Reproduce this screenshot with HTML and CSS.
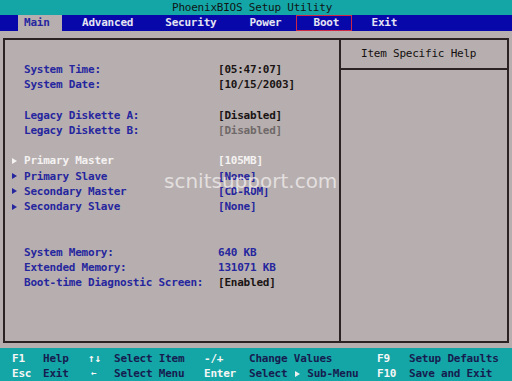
FILE: index.html
```html
<!DOCTYPE html>
<html>
<head>
<meta charset="utf-8">
<title>PhoenixBIOS Setup Utility</title>
<link rel="stylesheet" href="styles.css">
</head>
<body>
<div class="screen">
  <header class="title">PhoenixBIOS Setup Utility</header>
  <nav class="menubar">
    <span class="tab tab-main">Main</span>
    <span class="tab tab-adv">Advanced</span>
    <span class="tab tab-sec">Security</span>
    <span class="tab tab-pow">Power</span>
    <span class="tab tab-boot">Boot</span>
    <span class="tab tab-exit">Exit</span>
  </nav>
  <main class="main">
    <div class="frame">
      <section class="settings">
        <div class="group">
          <div class="row"><span class="mark"></span><span class="label">System Time:</span><span class="value">[05:47:07]</span></div>
          <div class="row"><span class="mark"></span><span class="label">System Date:</span><span class="value">[10/15/2003]</span></div>
        </div>
        <div class="group gap1">
          <div class="row"><span class="mark"></span><span class="label">Legacy Diskette A:</span><span class="value">[Disabled]</span></div>
          <div class="row"><span class="mark"></span><span class="label">Legacy Diskette B:</span><span class="value dim">[Disabled]</span></div>
        </div>
        <div class="group gap1">
          <div class="row selected"><span class="mark"><i class="tri"></i></span><span class="label">Primary Master</span><span class="value">[105MB]</span></div>
          <div class="row"><span class="mark"><i class="tri"></i></span><span class="label">Primary Slave</span><span class="value blue">[None]</span></div>
          <div class="row"><span class="mark"><i class="tri"></i></span><span class="label">Secondary Master</span><span class="value blue">[CD-ROM]</span></div>
          <div class="row"><span class="mark"><i class="tri"></i></span><span class="label">Secondary Slave</span><span class="value blue">[None]</span></div>
        </div>
        <div class="group gap2">
          <div class="row"><span class="mark"></span><span class="label">System Memory:</span><span class="value blue">640 KB</span></div>
          <div class="row"><span class="mark"></span><span class="label">Extended Memory:</span><span class="value blue">131071 KB</span></div>
          <div class="row"><span class="mark"></span><span class="label">Boot-time Diagnostic Screen:</span><span class="value">[Enabled]</span></div>
        </div>
      </section>
      <aside class="help">
        <div class="help-title">Item Specific Help</div>
      </aside>
    </div>
  </main>
  <footer class="keys">
    <span class="k">F1</span><span class="d">Help</span><span class="k">↑↓</span><span class="d">Select Item</span><span class="k">-/+</span><span class="d">Change Values</span><span class="k">F9</span><span class="d">Setup Defaults</span>
    <span class="k">Esc</span><span class="d">Exit</span><span class="k arrow">←</span><span class="d">Select Menu</span><span class="k">Enter</span><span class="d">Select <i class="tri inline"></i> Sub-Menu</span><span class="k">F10</span><span class="d">Save and Exit</span>
  </footer>
  <div class="watermark">scnitsupport.com</div>
</div>
</body>
</html>
```

FILE: styles.css
```css
html, body {
  margin: 0;
  padding: 0;
}
body {
  background: #b7afaf;
}
.screen {
  position: relative;
  width: 512px;
  height: 381px;
  overflow: hidden;
  display: flex;
  flex-direction: column;
  background: #b7afaf;
  font-family: "DejaVu Sans Mono", "Liberation Mono", monospace;
  font-weight: bold;
  font-size: 11px;
  letter-spacing: -0.22px;
  line-height: 15.24px;
  white-space: nowrap;
}
.title {
  height: 15px;
  line-height: 15px;
  background: #14a6a6;
  color: #101414;
  padding-left: 172px;
  font-weight: normal;
}
.menubar {
  height: 16px;
  line-height: 16px;
  display: flex;
  background: #0808aa;
  color: #e4e4f2;
  padding-left: 18px;
}
.tab {
  display: block;
  box-sizing: border-box;
  height: 16px;
}
.tab-main {
  width: 44px;
  padding-left: 6px;
  background: #b7afaf;
  color: #2626a0;
}
.tab-adv { margin-left: 20px; }
.tab-sec { margin-left: 32px; }
.tab-pow { margin-left: 33px; }
.tab-boot {
  margin-left: 15px;
  width: 56px;
  padding-left: 16px;
  border: 1px solid #cc2846;
  line-height: 14px;
}
.tab-exit { margin-left: 19px; }

.main {
  height: 317px;
  box-sizing: border-box;
  padding: 7px 3px 5px 3px;
}
.frame {
  height: 305px;
  box-sizing: border-box;
  border: 2px solid #2b2323;
  display: grid;
  grid-template-columns: 336px 1fr;
}
.settings {
  border-right: 2px solid #2b2323;
  padding: 22px 0 0 7px;
  color: #26269e;
}
.group.gap1 { margin-top: 15.24px; }
.group.gap2 { margin-top: 30.48px; }
.row {
  display: grid;
  grid-template-columns: 12px 194px 1fr;
  height: 15.24px;
}
.mark {
  display: flex;
  align-items: center;
}
.tri {
  display: block;
  width: 0;
  height: 0;
  border-left: 5px solid currentColor;
  border-top: 3px solid transparent;
  border-bottom: 3px solid transparent;
}
.tri.inline {
  display: inline-block;
  vertical-align: 0;
  margin: 0 1px;
  color: #eef0f0;
}
.value { color: #1a1414; }
.value.dim { color: #6f6969; }
.value.blue { color: #26269e; }
.row.selected,
.row.selected .value { color: #f4f2f2; }

.help-title {
  padding: 6px 0 7px 20px;
  border-bottom: 2px solid #2b2323;
  color: #141010;
  font-weight: normal;
}

.keys {
  flex: 1;
  background: #14a6a6;
  padding: 3px 0 0 12px;
  display: grid;
  grid-template-columns: 31px 45px 26px 90px 45px 128px 32px 1fr;
  grid-auto-rows: 15.24px;
}
.k { color: #f6f6f6; }
.k.arrow { padding-left: 3px; font-size: 9px; }
.d { color: #161c50; }

.watermark {
  position: absolute;
  left: 164px;
  top: 171px;
  font-family: "DejaVu Sans", sans-serif;
  font-weight: normal;
  font-size: 20px;
  line-height: 20px;
  letter-spacing: 0;
  color: rgba(236, 232, 232, 0.85);
}
```
